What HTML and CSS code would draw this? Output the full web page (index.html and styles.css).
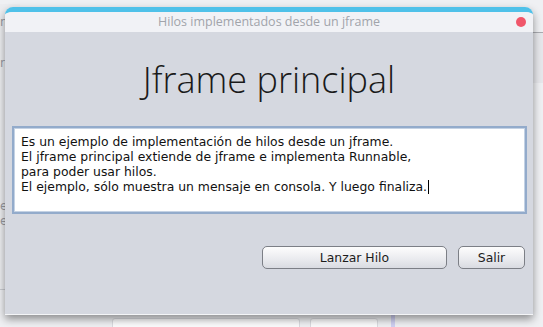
FILE: index.html
```html
<!DOCTYPE html>
<html>
<head>
    <meta charset="UTF-8">
    <title>Hilos implementados desde un jframe</title>
    <link rel="stylesheet" href="styles.css">
</head>
<body>
    <div class="desktop">
        <!-- window behind, mostly hidden -->
        <div class="back-win">
            <span class="back-text t1">nt</span>
            <span class="back-text t2">r</span>
            <span class="back-text t3">er</span>
            <span class="back-text t4">er</span>
        </div>
        <div class="back-strip"></div>
        <div class="back-box b1"></div>
        <div class="back-box b2"></div>
        <div class="back-line"></div>

        <div class="window">
            <div class="titlebar">
                <span class="title">Hilos implementados desde un jframe</span>
                <span class="close"></span>
            </div>
            <div class="content">
                <h1>Jframe principal</h1>
                <div class="textarea">Es un ejemplo de implementación de hilos desde un jframe.
El jframe principal extiende de jframe e implementa Runnable,
para poder usar hilos.
El ejemplo, sólo muestra un mensaje en consola. Y luego finaliza.<span class="caret"></span></div>
                <div class="buttons">
                    <button class="btn btn-wide">Lanzar Hilo</button>
                    <button class="btn">Salir</button>
                </div>
            </div>
        </div>
    </div>
</body>
</html>
```

FILE: styles.css
```css
body {
    margin: 0;
    background: #eff0f3;
    overflow: hidden;
}

.desktop {
    position: relative;
    width: 543px;
    height: 327px;
    overflow: hidden;
}

.back-win {
    position: absolute;
    left: -20px;
    top: 4px;
    width: 40px;
    height: 285px;
    background: #ecedf0;
    border-bottom: 1px solid #c9cbd0;
}

.back-text {
    position: absolute;
    left: 20px;
    font-family: "DejaVu Sans", sans-serif;
    font-size: 12px;
    color: #9a9ca2;
}

.t1 { top: 11px; }
.t2 { top: 52px; }
.t3 { top: 195px; }
.t4 { top: 210px; }

.back-strip {
    position: absolute;
    left: 500px;
    top: 32px;
    width: 43px;
    height: 50px;
    background: #e6e7eb;
    border-top: 1px solid #a9abb0;
}

.back-box {
    position: absolute;
    top: 318px;
    height: 20px;
    background: #fbfbfc;
    border: 1px solid #dadbe0;
    border-radius: 3px;
}

.b1 { left: 112px; width: 186px; }
.b2 { left: 310px; width: 66px; }

.back-line {
    position: absolute;
    left: 391px;
    top: 300px;
    width: 4px;
    height: 27px;
    background: #cfd0f2;
}

.window {
    position: absolute;
    left: 5px;
    top: 7px;
    width: 528px;
    border-top: 5px solid #4fc1e9;
    border-radius: 8px 8px 0 0;
    box-shadow: 0 4px 9px rgba(0, 0, 0, 0.42);
    overflow: hidden;
}

.titlebar {
    position: relative;
    height: 20px;
    background: #f1f2f6;
    text-align: center;
}

.title {
    font-family: "Open Sans", sans-serif;
    font-size: 12.5px;
    line-height: 19px;
    color: #a1a4ab;
}

.close {
    position: absolute;
    right: 7px;
    top: 5px;
    width: 10px;
    height: 10px;
    border-radius: 50%;
    background: #f0566a;
}

.content {
    background: #d5d8e0;
    height: 281px;
    padding-top: 1px;
    border-bottom: 1px solid #f4f5f7;
    display: flex;
    flex-direction: column;
}

h1 {
    margin: 22px 0 0;
    text-align: center;
    font-family: "Open Sans", sans-serif;
    font-weight: 300;
    font-size: 36px;
    line-height: 49px;
    color: #1a1a1a;
}

.textarea {
    margin: 22px 6px 0 7px;
    height: 78px;
    padding: 6px 7px 0;
    background: #fff;
    border: 2px solid #93abcb;
    box-shadow: inset 0 0 0 1px #c4d2e4;
    font-family: "DejaVu Sans", sans-serif;
    font-size: 12.4px;
    line-height: 15px;
    color: #111;
    white-space: pre;
}

.caret {
    display: inline-block;
    width: 1px;
    height: 14px;
    margin-left: 1px;
    vertical-align: -3px;
    background: #000;
}

.buttons {
    display: flex;
    justify-content: flex-end;
    gap: 11px;
    margin: 32px 8px 0 0;
}

.btn {
    width: 67px;
    height: 23px;
    padding: 0;
    border: 1px solid #7c7f86;
    border-radius: 5px;
    background: linear-gradient(#fdfdfd, #e9eaee 60%, #d9dbe1);
    font-family: "DejaVu Sans", sans-serif;
    font-size: 12.4px;
    color: #1c1c1c;
}

.btn-wide {
    width: 185px;
}
```
